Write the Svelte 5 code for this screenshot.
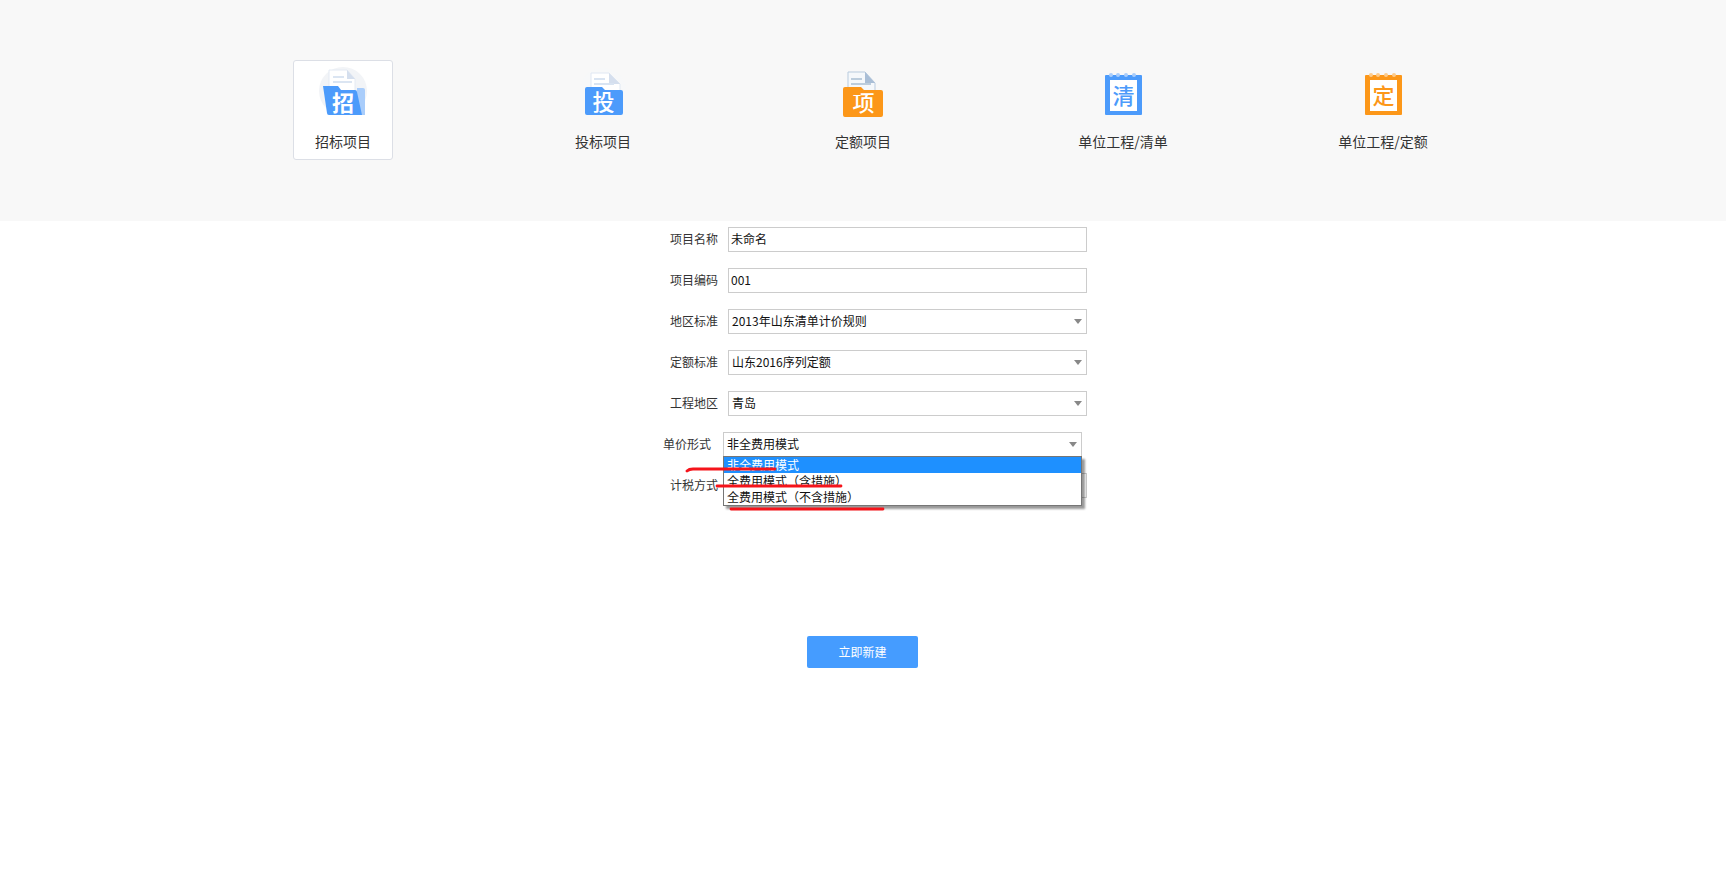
<script>
  const rows = [
    { label: '地区标准', value: '2013年山东清单计价规则' },
    { label: '定额标准', value: '山东2016序列定额' },
    { label: '工程地区', value: '青岛' }
  ];
  const options = ['非全费用模式', '全费用模式（含措施）', '全费用模式（不含措施）'];
</script>

<div class="page">
  <header class="tabs">
    <div class="tab active">
      <svg class="icon" viewBox="0 0 60 60" aria-hidden="true">
        <circle cx="30" cy="25" r="24" fill="#f2f4f7" />
        <path d="M16 4h18l8 9v30H16z" fill="#fff" stroke="#e4eaf3" />
        <path d="M34 4l8 9h-8z" fill="#d5dfee" />
        <rect x="20" y="10" width="11" height="2" fill="#dbe5f2" />
        <rect x="20" y="15" width="19" height="2" fill="#dbe5f2" />
        <path d="M44 22h6a2 2 0 0 1 2 2v25h-8z" fill="#a9cdfb" />
        <path d="M10 20h15l3 4h14a2 2 0 0 1 2 2l5 23H16a2 2 0 0 1-2-2z" fill="#4c9bfb" />
        <text x="30" y="45" class="glyph slant">招</text>
      </svg>
      <span>招标项目</span>
    </div>

    <div class="tab">
      <svg class="icon" viewBox="0 0 60 60" aria-hidden="true">
        <circle cx="30" cy="25" r="23" fill="#f7f8f9" />
        <path d="M18 7h18l11 11v12H18z" fill="#fff" stroke="#e0e8f3" />
        <path d="M36 7l11 11H36z" fill="#d5dfee" />
        <rect x="21" y="12" width="11" height="2" fill="#d9e4f2" />
        <rect x="21" y="17" width="20" height="2" fill="#d9e4f2" />
        <path d="M12 23a2 2 0 0 1 2-2h15l3 3h16a2 2 0 0 1 2 2v21a2 2 0 0 1-2 2H14a2 2 0 0 1-2-2z" fill="#4c9bfb" />
        <text x="30.5" y="44" class="glyph">投</text>
      </svg>
      <span>投标项目</span>
    </div>

    <div class="tab">
      <svg class="icon" viewBox="0 0 60 60" aria-hidden="true">
        <path d="M15 6h17l10 11v13H15z" fill="#f5f8fb" stroke="#b9cbde" />
        <path d="M32 6l10 11H32z" fill="#a9bed6" />
        <rect x="18" y="12" width="11" height="2" fill="#bccddd" />
        <rect x="18" y="17" width="20" height="2" fill="#bccddd" />
        <path d="M10 23a2 2 0 0 1 2-2h16l3 3h17a2 2 0 0 1 2 2v23a2 2 0 0 1-2 2H12a2 2 0 0 1-2-2z" fill="#fc9719" />
        <text x="30.5" y="45" class="glyph">项</text>
      </svg>
      <span>定额项目</span>
    </div>

    <div class="tab">
      <svg class="icon" viewBox="0 0 60 60" aria-hidden="true">
        <rect x="12" y="9" width="37" height="40" rx="1" fill="#4c9bfb" />
        <circle cx="18" cy="9" r="2" fill="#a9cdfb" />
        <circle cx="25" cy="9" r="2" fill="#a9cdfb" />
        <circle cx="33" cy="9" r="2" fill="#a9cdfb" />
        <circle cx="41" cy="9" r="2" fill="#a9cdfb" />
        <rect x="17" y="14" width="27" height="31" fill="#fff" />
        <text x="30.5" y="38" class="glyph note blue">清</text>
      </svg>
      <span>单位工程/清单</span>
    </div>

    <div class="tab">
      <svg class="icon" viewBox="0 0 60 60" aria-hidden="true">
        <rect x="12" y="9" width="37" height="40" rx="1" fill="#fc9719" />
        <circle cx="18" cy="9" r="2" fill="#fdcb8c" />
        <circle cx="25" cy="9" r="2" fill="#fdcb8c" />
        <circle cx="33" cy="9" r="2" fill="#fdcb8c" />
        <circle cx="41" cy="9" r="2" fill="#fdcb8c" />
        <rect x="17" y="14" width="27" height="31" fill="#fff" />
        <text x="30.5" y="38" class="glyph note orange">定</text>
      </svg>
      <span>单位工程/定额</span>
    </div>
  </header>

  <form class="form" onsubmit={(e) => e.preventDefault()}>
    <div class="row">
      <span class="label">项目名称</span>
      <input class="field" value="未命名" />
    </div>
    <div class="row">
      <span class="label">项目编码</span>
      <input class="field" value="001" />
    </div>
    {#each rows as row}
      <div class="row">
        <span class="label">{row.label}</span>
        <div class="field select">{row.value}<i class="arrow"></i></div>
      </div>
    {/each}

    <div class="row open">
      <span class="label">单价形式</span>
      <div class="field select short">
        非全费用模式<i class="arrow"></i>
        <ul class="dropdown">
          {#each options as option, i}
            <li class:selected={i === 0}>{option}</li>
          {/each}
        </ul>
      </div>
    </div>

    <div class="row">
      <span class="label">计税方式</span>
      <div class="field select"><i class="arrow"></i></div>
    </div>

    <svg class="marks" viewBox="0 0 447 60" aria-hidden="true">
      <path d="M47 19q2-2 6-2H135" />
      <path d="M77 34H201" />
      <path d="M91 57H243" />
    </svg>

    <button class="submit" type="button">立即新建</button>
  </form>
</div>

<style>
  :global(body) {
    margin: 0;
    background: #fff;
  }
  .page {
    font-family: "Noto Sans CJK SC", "Noto Sans", sans-serif;
    font-size: 12px;
    color: #333;
    height: 877px;
    overflow: hidden;
  }
  .tabs {
    height: 221px;
    box-sizing: border-box;
    padding-top: 60px;
    background: #f8f8f8;
    display: flex;
    justify-content: center;
    gap: 160px;
  }
  .tab {
    width: 100px;
    height: 100px;
    box-sizing: border-box;
    border: 1px solid transparent;
    border-radius: 3px;
    display: flex;
    flex-direction: column;
    align-items: center;
    font-size: 14px;
    line-height: 20px;
    white-space: nowrap;
  }
  .tab.active {
    background: #fff;
    border-color: #dcdfe6;
  }
  .icon {
    width: 60px;
    height: 60px;
    margin-top: 5px;
    margin-bottom: 5px;
    flex: none;
  }
  .glyph {
    font-family: "Noto Sans CJK SC", sans-serif;
    font-size: 22px;
    font-weight: 500;
    fill: #fff;
    text-anchor: middle;
  }
  .glyph.slant {
    font-weight: 700;
  }
  .glyph.note {
    font-size: 22px;
    font-weight: 500;
  }
  .glyph.blue {
    fill: #4c9bfb;
  }
  .glyph.orange {
    fill: #fc9719;
  }
  .form {
    position: relative;
    width: 447px;
    padding-left: 1px;
    margin: 6px auto 0;
    display: flex;
    flex-direction: column;
    gap: 16px;
  }
  .row {
    display: flex;
    align-items: center;
    gap: 10px;
    height: 25px;
  }
  .row.open {
    margin-left: -7px;
    gap: 12px;
  }
  .label {
    width: 78px;
    flex: none;
    text-align: right;
    color: #333;
    padding-bottom: 2px;
  }
  .field {
    width: 359px;
    height: 25px;
    box-sizing: border-box;
    border: 1px solid #ccc;
    background: #fff;
    font: inherit;
    color: #111;
    padding: 0 2px 2px;
    margin: 0;
    outline: none;
    border-radius: 0;
  }
  .select {
    position: relative;
    line-height: 21px;
    padding-left: 3px;
  }
  .arrow {
    position: absolute;
    right: 4px;
    top: 9px;
    border-style: solid;
    border-width: 5px 4px 0;
    border-color: #888 transparent transparent;
  }
  .dropdown {
    position: absolute;
    z-index: 2;
    left: -1px;
    right: -1px;
    top: 23px;
    margin: 0;
    padding: 0;
    list-style: none;
    background: #fff;
    border: 1px solid #767676;
    box-shadow: 3px 3px 2px rgba(0, 0, 0, 0.4);
  }
  .dropdown li {
    height: 16px;
    line-height: 16px;
    padding-left: 3px;
    color: #111;
  }
  .dropdown li.selected {
    background: #1e90ff;
    color: #fff;
  }
  .marks {
    position: absolute;
    z-index: 3;
    left: 1px;
    top: 225px;
    width: 447px;
    height: 60px;
    pointer-events: none;
    fill: none;
    stroke: #f5141b;
    stroke-width: 2.8;
    stroke-linecap: round;
  }
  .submit {
    align-self: center;
    width: 111px;
    height: 32px;
    margin: 122px 2px 0 0;
    border: 0;
    border-radius: 2px;
    background: #459cff;
    color: #fff;
    font: inherit;
    padding: 0 0 1px;
  }
</style>
